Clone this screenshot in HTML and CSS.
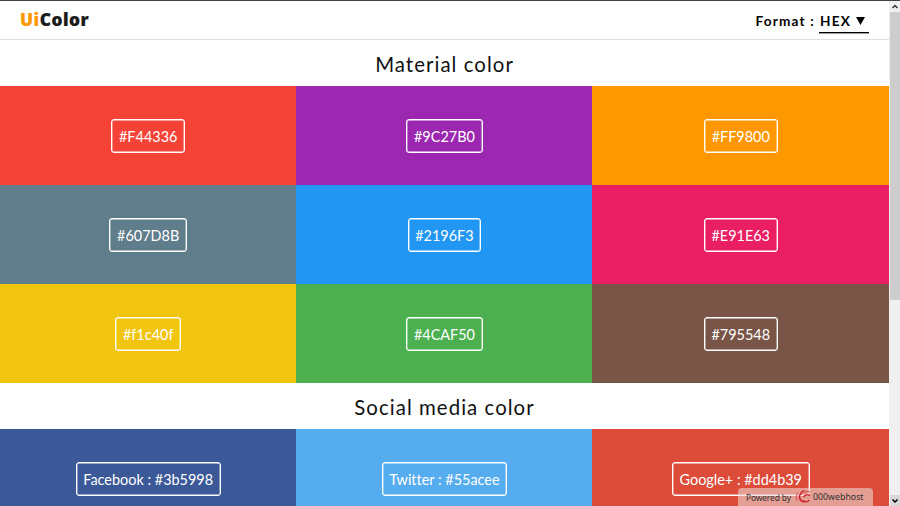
FILE: index.html
```html
<!DOCTYPE html>
<html lang="en">
<head>
<meta charset="utf-8">
<title>UiColor</title>
<link rel="stylesheet" href="styles.css">
</head>
<body>
<div class="window">
  <div class="page">
    <header class="header">
      <div class="logo"><span class="logo-accent">Ui</span>Color</div>
      <div class="format"><span class="format-label">Format :</span><span class="select">HEX <svg class="caret" viewBox="0 0 9 8"><path d="M0 0h9L4.500 8z"/></svg></span></div>
    </header>
    <h1 class="title">Material color</h1>
    <section class="swatches">
      <div class="swatch red"><span class="code">#F44336</span></div>
      <div class="swatch purple"><span class="code">#9C27B0</span></div>
      <div class="swatch orange"><span class="code">#FF9800</span></div>
      <div class="swatch slate"><span class="code">#607D8B</span></div>
      <div class="swatch blue"><span class="code">#2196F3</span></div>
      <div class="swatch pink"><span class="code">#E91E63</span></div>
      <div class="swatch yellow"><span class="code">#f1c40f</span></div>
      <div class="swatch green"><span class="code">#4CAF50</span></div>
      <div class="swatch brown"><span class="code">#795548</span></div>
    </section>
    <h1 class="title">Social media color</h1>
    <section class="swatches">
      <div class="swatch facebook"><span class="code">Facebook : #3b5998</span></div>
      <div class="swatch twitter"><span class="code">Twitter : #55acee</span></div>
      <div class="swatch google"><span class="code">Google+ : #dd4b39</span></div>
    </section>
  </div>
  <div class="scrollbar">
    <svg class="arrow" viewBox="0 0 10 11"><path d="M2.500 7L5 4.500l2.500 2.500"/></svg>
    <div class="thumb"></div>
    <svg class="arrow arrow-down" viewBox="0 0 10 11"><path d="M2.500 4.500L5 7l2.500-2.500"/></svg>
  </div>
  <div class="host"><span class="powered">Powered by</span>
    <svg class="host-logo" viewBox="0 0 16 14"><path class="swirl-thin" d="M2.500 3C.5 6 1 9 2.500 10.500M9 3.500C10 1.500 12.500 1 15 2"/><path class="swirl" d="M4.500 4.500C4 8 5.500 11 9 12M8 10.500C10 12.500 13 12 14 10M5.500 5C6 2.500 7.500 1 9.500 1M8.500 7C10 5 13 4.500 15 5.500"/></svg>
    <span class="host-name">000webhost</span></div>
</div>
</body>
</html>
```
FILE: styles.css
```css
* { box-sizing: border-box; }
body { margin: 0; background: #fff; color: #111; font-family: Lato, sans-serif; overflow: hidden; }
.window { position: relative; display: flex; height: 506px; border-top: 1px solid #444146; overflow: hidden; }
.page { width: 889px; flex: none; }
.header { display: flex; justify-content: space-between; height: 39px; padding: 0 20px; border-bottom: 1px solid #dadedd; }
.logo { font: 900 17.3px/37px "Noto Sans", sans-serif; color: #1a1a1a; letter-spacing: .5px; -webkit-text-stroke: .2px; }
.logo-accent { color: #ff9800; }
.format { display: flex; gap: 4px; font-size: 13.6px; font-weight: 700; letter-spacing: 1.2px; line-height: 20px; padding-top: 10px; color: #000; }
.select { display: flex; align-items: center; width: 50px; height: 22px; padding: 0 4px 1px 1px; justify-content: space-between; font-size: 13.6px; border-bottom: 1px solid #000; box-shadow: 0 .4px 0 #000; }
.caret { width: 9px; height: 8px; }
.title { margin: 0; height: 46px; font-size: 20.4px; font-weight: 400; letter-spacing: 1.05px; line-height: 48px; text-align: center; }
.swatches { display: grid; grid-template-columns: 296.4px 296.1px 296.5px; grid-auto-rows: 99px; }
.swatch { display: flex; align-items: center; justify-content: center; color: #fff; }
.code { height: 34px; padding: 0 6.7px; border: 1px solid #fff; border-radius: 3px; font-size: 14.45px; line-height: 33px; font-variant-ligatures: none; box-shadow: inset 0 0 0 .4px #fff; }
.red { background: #f44336; }
.purple { background: #9c27b0; }
.orange { background: #ff9800; }
.slate { background: #607d8b; }
.blue { background: #2196f3; }
.pink { background: #e91e63; }
.yellow { background: #f1c40f; }
.green { background: #4caf50; }
.brown { background: #795548; }
.facebook { background: #3b5998; }
.twitter { background: #55acee; }
.google { background: #dd4b39; }
.scrollbar { display: flex; flex-direction: column; flex: 1; height: 505px; padding-left: 1px; background: #f0f0f0; }
.thumb { height: 288px; margin-bottom: auto; background: #cdcdcd; }
.arrow { width: 10px; height: 11px; fill: none; stroke: #333; stroke-width: 1.5; }
.arrow-down { background: #d8d8d8; stroke: #000; }
.host { position: absolute; left: 738px; bottom: 0; display: flex; align-items: center; width: 135px; height: 18px; padding-left: 8px; border-radius: 4px 4px 0 0; background: rgba(235, 214, 210, .6); color: #333; font: 8.4px "Noto Sans", sans-serif; }
.powered { width: 49px; white-space: nowrap; letter-spacing: -.1px; }
.host-logo { width: 16px; height: 14px; }
.swirl, .swirl-thin { fill: none; stroke: #d0232b; stroke-width: 1.6; }
.swirl-thin { stroke-width: .8; }
.host-name { margin-left: 2px; font-size: 8.8px; }
```
